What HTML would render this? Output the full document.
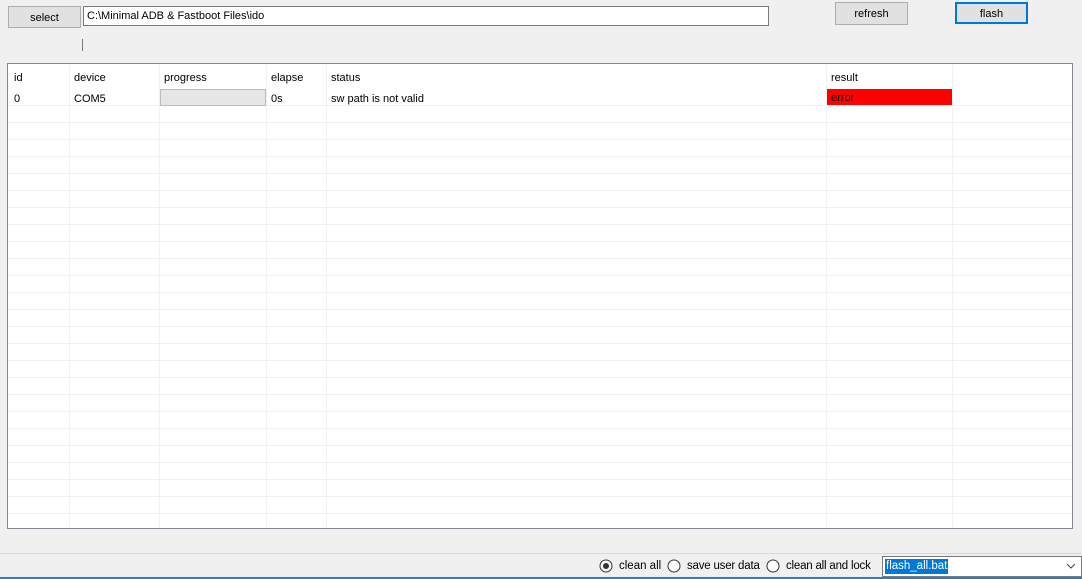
<!DOCTYPE html>
<html><head><meta charset="utf-8"><style>
*{box-sizing:border-box;margin:0;padding:0}
body{width:1082px;height:579px;background:#f0f0f0;position:relative;overflow:hidden;font-family:"Liberation Sans",Arial,sans-serif;font-size:11px;color:#000}
.a{position:absolute}
.btn{position:absolute;background:#e1e1e1;border:1px solid #adadad;text-align:center;font-size:11px}
#grid{left:7px;top:63px;width:1066px;height:466px;border:1px solid #828790;background:#fff;overflow:hidden}
.rows{left:0;top:41px;width:1064px;height:424px;background:repeating-linear-gradient(to bottom,#f0f0f0 0,#f0f0f0 1px,transparent 1px,transparent 17px)}
.col{top:1px;width:1px;height:464px;background:#f0f0f0}
.t{font-size:11px;white-space:nowrap}
.r{position:absolute;font-size:11.5px;top:560px;white-space:nowrap}
</style></head><body>
<div class="btn" style="left:8px;top:6px;width:73px;height:22px;line-height:22px">select</div>
<div class="a" style="left:83px;top:6px;width:686px;height:20px;background:#fff;border:1px solid #7a7a7a;padding-left:3px;line-height:18px;font-size:11px">C:\Minimal ADB &amp; Fastboot Files\ido</div>
<div class="a" style="left:82px;top:39px;width:1px;height:12px;background:#7a7a7a"></div>
<div class="btn" style="left:835px;top:2px;width:73px;height:23px;line-height:23px">refresh</div>
<div class="btn" style="left:955px;top:2px;width:73px;height:22px;line-height:20px;border:2px solid #0078d7">flash</div>
<div id="grid" class="a">
 <div class="a rows"></div>
 <div class="a col" style="left:61px"></div>
 <div class="a col" style="left:151px"></div>
 <div class="a col" style="left:258px"></div>
 <div class="a col" style="left:318px"></div>
 <div class="a col" style="left:818px"></div>
 <div class="a col" style="left:944px"></div>
 <div class="a t" style="left:6px;top:8px">id</div>
 <div class="a t" style="left:66px;top:8px">device</div>
 <div class="a t" style="left:156px;top:8px">progress</div>
 <div class="a t" style="left:263px;top:8px">elapse</div>
 <div class="a t" style="left:323px;top:8px">status</div>
 <div class="a t" style="left:823px;top:8px">result</div>
 <div class="a t" style="left:6px;top:29px">0</div>
 <div class="a t" style="left:66px;top:29px">COM5</div>
 <div class="a" style="left:152px;top:25px;width:106px;height:17px;background:#e6e6e6;border:1px solid #bcbcbc"></div>
 <div class="a t" style="left:263px;top:29px">0s</div>
 <div class="a t" style="left:323px;top:29px">sw path is not valid</div>
 <div class="a t" style="left:819px;top:25px;width:125px;height:16px;background:#f00;padding-left:4px;line-height:18px">error</div>
</div>
<div class="a" style="left:0;top:553px;width:1082px;height:1px;background:#d7d7d7"></div>
<div class="a" style="left:0;top:577px;width:1082px;height:2px;background:#1883d7"></div>
<svg class="a" style="left:599px;top:559px" width="14" height="14"><circle cx="7" cy="7" r="6" fill="#fff" stroke="#333"/><circle cx="7" cy="7" r="3" fill="#333"/></svg>
<div class="r" style="left:619px">clean all</div>
<svg class="a" style="left:667px;top:559px" width="14" height="14"><circle cx="7" cy="7" r="6" fill="#fff" stroke="#333"/></svg>
<div class="r" style="left:687px;letter-spacing:-0.2px">save user data</div>
<svg class="a" style="left:766px;top:559px" width="14" height="14"><circle cx="7" cy="7" r="6" fill="#fff" stroke="#333"/></svg>
<div class="r" style="left:786px;letter-spacing:-0.2px">clean all and lock</div>
<div class="a" style="left:882px;top:556px;width:200px;height:21px;background:#fff;border:1px solid #7a7a7a"></div>
<div class="a" style="left:885px;top:559px;height:15px;background:#0078d7;color:#fff;font-size:11.5px;line-height:15px;padding:0 1px">flash_all.bat</div>
<svg class="a" style="left:1066px;top:563px" width="10" height="7"><path d="M1 1 L5 5 L9 1" fill="none" stroke="#444" stroke-width="1"/></svg>
</body></html>
